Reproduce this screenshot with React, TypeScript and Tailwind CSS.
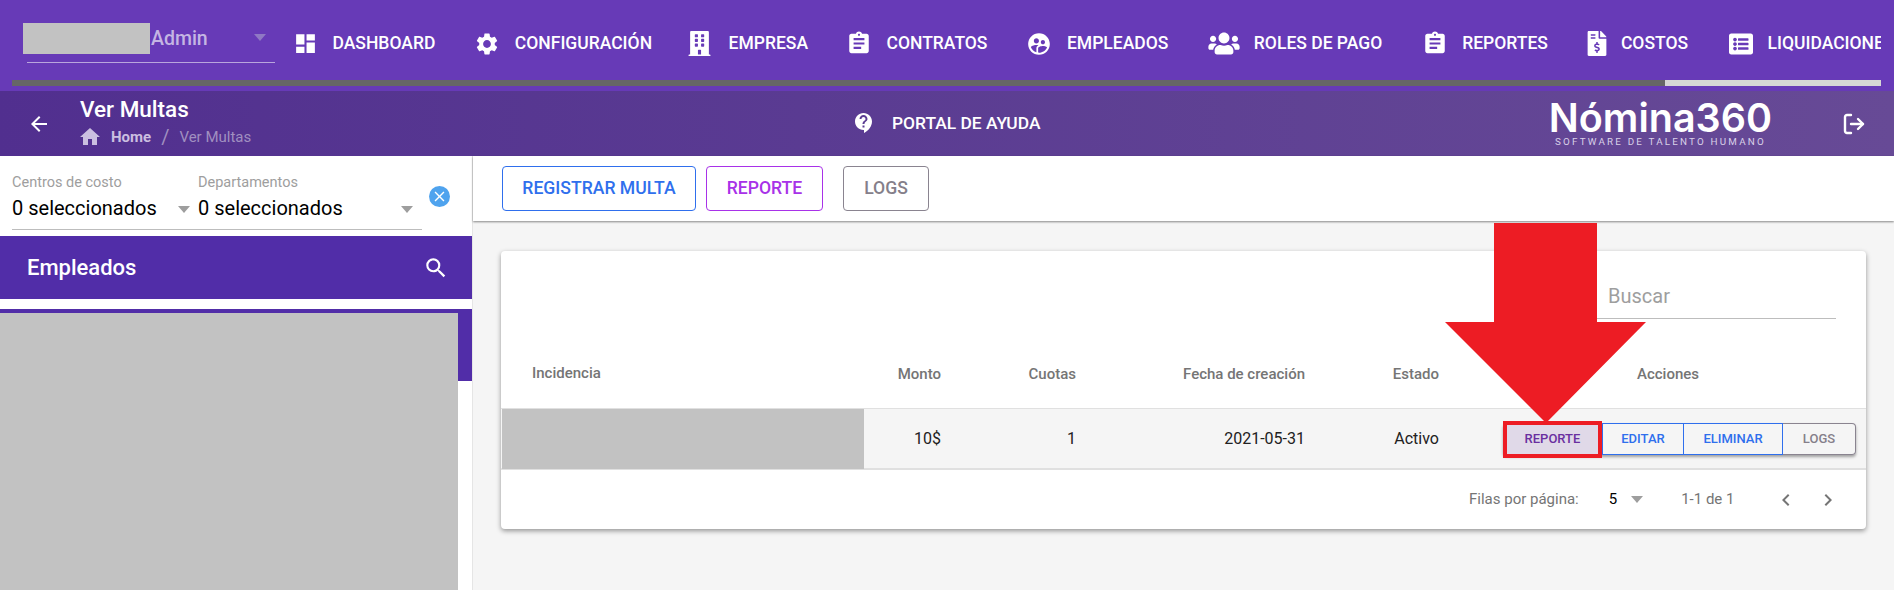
import React from "react";
import { MdDashboard, MdHome, MdArrowBack, MdSearch, MdClose, MdChevronLeft, MdChevronRight, MdSettings, MdContactSupport, MdAssignment, MdSupervisedUserCircle } from "react-icons/md";
import { FaBuilding, FaUsers, FaFileInvoiceDollar, FaListAlt } from "react-icons/fa";
import { LogOut } from "lucide-react";

const font = "font-['Roboto',sans-serif]";

const navItems = [
  { label: "DASHBOARD", icon: <MdDashboard className="w-[25px] h-[25px] -mx-[3px]" />, box: "w-[19px]", item: "" },
  { label: "CONFIGURACIÓN", icon: <MdSettings className="w-[26px] h-[26px] -mx-[3px]" />, box: "w-[21px]", item: "" },
  { label: "EMPRESA", icon: <FaBuilding className="w-[23px] h-[25px]" />, box: "w-[23px]", item: "-ml-[5px]" },
  { label: "CONTRATOS", icon: <MdAssignment className="w-[27px] h-[27px] -mx-[3px]" />, box: "w-[20px]", item: "" },
  { label: "EMPLEADOS", icon: <MdSupervisedUserCircle className="w-[26px] h-[26px] -mx-[3px]" />, box: "w-[21px]", item: "" },
  { label: "ROLES DE PAGO", icon: <FaUsers className="w-[32px] h-[25px]" />, box: "w-[32px] -mr-[4px]", item: "-ml-[1px]" },
  { label: "REPORTES", icon: <MdAssignment className="w-[27px] h-[27px] -mx-[3px]" />, box: "w-[20px]", item: "ml-[1.5px]" },
  { label: "COSTOS", icon: <FaFileInvoiceDollar className="w-[20px] h-[25px]" />, box: "w-[20px] -mr-[4px]", item: "-ml-[1.5px]" },
  { label: "LIQUIDACIONES", icon: <FaListAlt className="w-[26px] h-[24px]" />, box: "w-[26px] -mr-[4px]", item: "-ml-[1px]" },
];

function Caret({ className = "" }: { className?: string }) {
  return <span className={"w-0 h-0 border-x-[6.5px] border-x-transparent border-t-[7px] border-t-[#9e9e9e] " + className} />;
}

function TopBar() {
  return (
    <div className="h-[91px] bg-[#673ab7] overflow-hidden">
      <div className="flex h-[80px] ml-[12px] w-[1869px] overflow-hidden">
        <div className="shrink-0 w-[248px] ml-[15px] mr-[21px] mt-[23px] h-[40px] border-b border-[#b9a5dd] flex items-start">
          <div className="w-[127px] h-[31px] -ml-[4px] bg-[#c2c2c2] shrink-0" />
          <span className="text-[#c4b5e3] text-[19.5px] font-medium leading-[32px] ml-[1px]">Admin</span>
          <Caret className="ml-[46px] mt-[11px] !border-t-[#8f78c4]" />
        </div>
        <div className="flex items-center gap-[41px] pt-[7px] shrink-0">
          {navItems.map((n) => (
            <div key={n.label} className={"flex items-center gap-[17.5px] text-white shrink-0 " + n.item}>
              <span className={"flex justify-center " + n.box}>{n.icon}</span>
              <span className="text-[17.5px] font-medium">{n.label}</span>
            </div>
          ))}
        </div>
      </div>
      <div className="ml-[12px] w-[1869px] h-[6px] bg-[#666666] flex justify-end">
        <div className="w-[216px] h-full bg-[#d6d6d6]" />
      </div>
    </div>
  );
}

function SubHeader() {
  return (
    <div className="h-[65px] flex items-center text-white bg-gradient-to-r from-[#512f8f] to-[#674a96]">
      <MdArrowBack className="w-[24px] h-[24px] ml-[27px] shrink-0" />
      <div className="ml-[29px] w-[400px]">
        <div className="text-[22.5px] font-medium leading-[25px] -mt-[1px]">Ver Multas</div>
        <div className="flex items-center text-[15px] leading-[20px] mt-[3px]">
          <MdHome className="w-[24px] h-[24px] -ml-[2px] text-[#cbbfe0]" />
          <span className="ml-[9px] font-bold text-[#cbbfe0]">Home</span>
          <span className="ml-[10px] text-[20px] text-[#a08fc0]">/</span>
          <span className="ml-[10px] text-[#a08fc0]">Ver Multas</span>
        </div>
      </div>
      <div className="flex items-center ml-[372px]">
        <MdContactSupport className="w-[24px] h-[24px]" />
        <span className="ml-[16px] text-[17.4px] font-medium">PORTAL DE AYUDA</span>
      </div>
      <div className="ml-[509px] flex flex-col items-center w-[222px]">
        <span className="font-['Inter',sans-serif] font-semibold text-[39.5px] leading-[36px]">Nómina360</span>
        <span className="text-[9.8px] tracking-[2.2px] leading-[12px] text-[#d9d0e8]">SOFTWARE DE TALENTO HUMANO</span>
      </div>
      <LogOut className="w-[24px] h-[24px] ml-[71px]" strokeWidth={2.4} />
    </div>
  );
}

function Sidebar() {
  return (
    <div className="w-[473px] shrink-0 bg-white border-r border-[#e5e5e5] flex flex-col h-[434px]">
      <div className="h-[80px] relative">
        <div className="flex ml-[12px] w-[410px] h-[74px] border-b border-[#bdbdbd]">
          <div className="w-[186px]">
            <div className="text-[14.5px] leading-[18px] mt-[18px] text-[#9e9e9e]">Centros de costo</div>
            <div className="flex items-center text-[20px] leading-[30px] text-black mt-[1px]">
              0 seleccionados
              <Caret className="ml-[21px] mt-[3px]" />
            </div>
          </div>
          <div className="flex-1">
            <div className="text-[14.5px] leading-[18px] mt-[18px] text-[#9e9e9e]">Departamentos</div>
            <div className="flex items-center text-[20px] leading-[30px] text-black mt-[1px]">
              0 seleccionados
              <Caret className="ml-[58px] mt-[3px]" />
            </div>
          </div>
        </div>
        <div className="absolute left-[429px] top-[30px] w-[21px] h-[21px] rounded-full bg-[#4fa3ee] flex items-center justify-center">
          <MdClose className="w-[17px] h-[17px] text-white" />
        </div>
      </div>
      <div className="h-[63px] bg-[#512da8] flex items-center justify-between pl-[27px] pr-[23px] text-white">
        <span className="text-[22px] font-medium">Empleados</span>
        <MdSearch className="w-[26px] h-[26px]" />
      </div>
      <div className="mt-[10px] h-[72px] bg-[#512da8]" />
      <div className="-mt-[68px] w-[458px] h-[277px] bg-[#c2c2c2]" />
    </div>
  );
}

const btn = "h-[45px] border rounded-[4px] flex items-center justify-center text-[17.6px] font-medium";

function Toolbar() {
  return (
    <div className="h-[65px] bg-white shadow-[0_1px_2px_rgba(0,0,0,0.45)] flex items-center pl-[29px]">
      <div className={btn + " w-[194px] border-[#2f6fed] text-[#2f6fed]"}>REGISTRAR MULTA</div>
      <div className={btn + " w-[117px] ml-[10px] border-[#a832e8] text-[#a832e8]"}>REPORTE</div>
      <div className={btn + " w-[86px] ml-[20px] border-[#8a8490] text-[#857f8a]"}>LOGS</div>
    </div>
  );
}

const actionBtn = "h-[32px] flex items-center justify-center text-[13px] font-medium";

function TableCard() {
  return (
    <div className="ml-[28px] mt-[30px] w-[1365px] h-[278px] rounded-[4px] bg-white shadow-[0_2px_5px_rgba(0,0,0,0.4)]">
      <div className="h-[157px] pt-[26px]">
        <div className="ml-[999px] mr-[30px] h-[42px] pt-[4px] pl-[108px] border-b border-[#bdbdbd] text-[20px] text-[#9e9e9e] leading-[30px]">Buscar</div>
        <div className="mt-[42px] flex text-[15px] font-medium text-[#757575] leading-[26px]">
          <div className="w-[363px] pl-[31px] leading-[24px]">Incidencia</div>
          <div className="w-[77px] text-right">Monto</div>
          <div className="w-[135px] text-right">Cuotas</div>
          <div className="w-[229px] text-right">Fecha de creación</div>
          <div className="w-[134px] text-right">Estado</div>
          <div className="ml-[198px]">Acciones</div>
        </div>
      </div>
      <div className="h-[62px] bg-[#f5f5f5] border-t border-b-2 border-[#e0e0e0] flex items-center text-[16px] text-[#212121]">
        <div className="w-[362px] h-[60px] ml-[1px] bg-[#c2c2c2] shrink-0" />
        <div className="w-[77px] text-right">10$</div>
        <div className="w-[135px] text-right">1</div>
        <div className="w-[229px] text-right">2021-05-31</div>
        <div className="w-[134px] text-right">Activo</div>
        <div className="flex ml-[64px] shadow-[0_2px_3px_rgba(0,0,0,0.35)] rounded-[4px]">
          <div className={actionBtn + " w-[99px] bg-[#e0d9e8] text-[#6a2fa0]"}>REPORTE</div>
          <div className={actionBtn + " w-[82px] border-[1.5px] border-[#2f6fed] text-[#2f6fed]"}>EDITAR</div>
          <div className={actionBtn + " w-[99px] border-[1.5px] border-l-0 border-[#2f6fed] text-[#2f6fed]"}>ELIMINAR</div>
          <div className={actionBtn + " w-[73px] border-[1.5px] border-l-0 rounded-r-[4px] border-[#8a8490] text-[#857f8a]"}>LOGS</div>
        </div>
      </div>
      <div className="h-[59px] flex items-center text-[15px] text-[#757575]">
        <span className="ml-[968px]">Filas por página:</span>
        <span className="ml-[30px] text-black">5</span>
        <Caret className="ml-[14px]" />
        <span className="ml-[38px]">1-1 de 1</span>
        <MdChevronLeft className="w-[24px] h-[24px] ml-[40px]" />
        <MdChevronRight className="w-[24px] h-[24px] ml-[18px]" />
      </div>
    </div>
  );
}

export default function App() {
  return (
    <div className={font + " w-[1894px] h-[590px] overflow-hidden bg-[#f5f5f5] relative"}>
      <TopBar />
      <SubHeader />
      <div className="flex">
        <Sidebar />
        <div className="flex-1">
          <Toolbar />
          <TableCard />
        </div>
      </div>

      {/* annotation on top of the screenshot */}
      <svg className="absolute left-[1445px] top-[223px]" width="201" height="200" viewBox="0 0 201 200">
        <path d="M49 0H152V99H201L101 200L0 99H49Z" fill="#ed1c24" />
      </svg>
      <div className="absolute left-[1503px] top-[421px] w-[99px] h-[37px] border-[4.5px] border-[#ed1c24]" />
    </div>
  );
}
